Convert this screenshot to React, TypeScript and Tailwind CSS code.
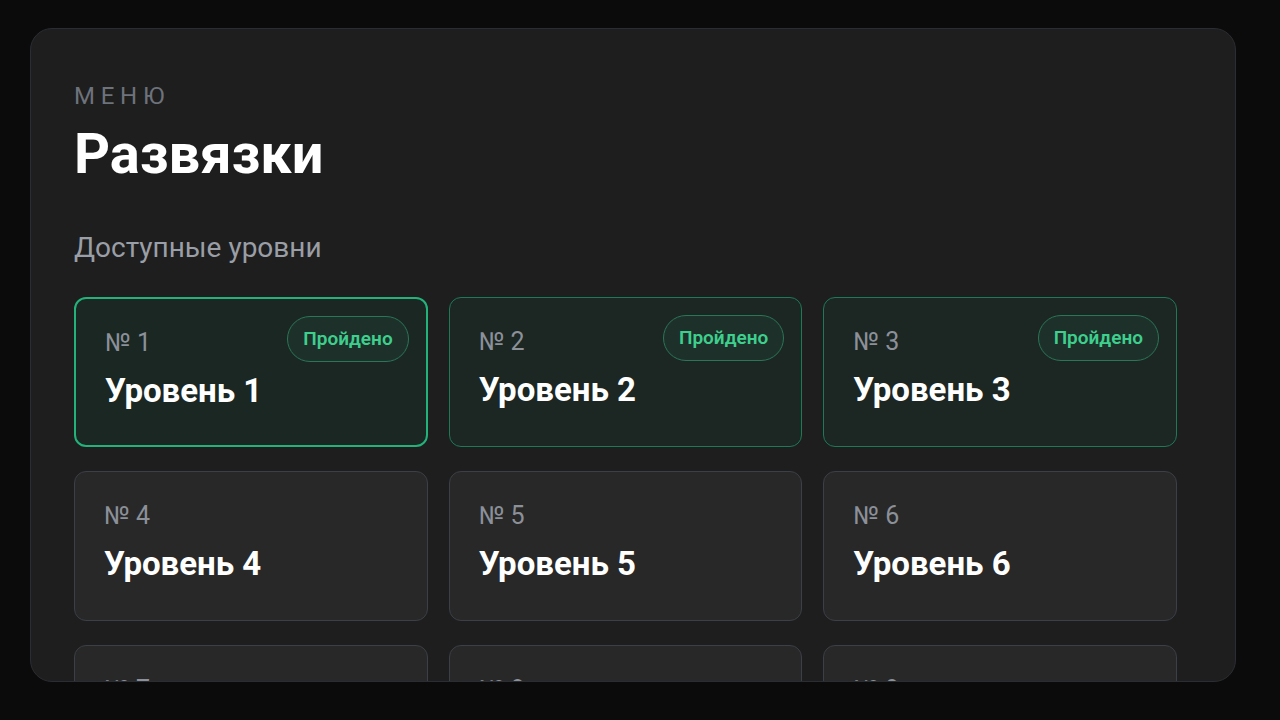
const levels = [
  { n: 1, done: true, active: true },
  { n: 2, done: true },
  { n: 3, done: true },
  { n: 4 },
  { n: 5 },
  { n: 6 },
  { n: 7 },
  { n: 8 },
  { n: 9 },
];

function LevelCard({ n, done, active }: { n: number; done?: boolean; active?: boolean }) {
  const base = 'relative h-[150px] rounded-[12px] px-[29px] pt-[27px]';
  const style = active
    ? 'border-2 border-[#22b27a] bg-[#1b2723]'
    : done
      ? 'border border-[#1d7a58] bg-[#1c2623]'
      : 'border border-[#3b3f46] bg-[#282828]';
  return (
    <div className={`${base} ${style}`}>
      {done && (
        <span className="absolute right-[17px] top-[17px] rounded-full border border-[#2a7658] bg-[#1d3029] px-[15px] py-[9px] text-[19px] font-semibold leading-[26px] text-[#3ecf8e]">
          Пройдено
        </span>
      )}
      <div className="text-[25px] leading-[34px] text-[#8b9099]">№ {n}</div>
      <div className="mt-[12px] text-[33px] font-bold leading-[38px] text-white">Уровень {n}</div>
    </div>
  );
}

export default function App() {
  return (
    <div className="h-[720px] w-[1280px] bg-[#0b0b0c] px-[30px] pt-[28px]" style={{ fontFamily: 'Roboto, "Noto Sans", sans-serif' }}>
      <div className="h-[654px] w-[1206px] overflow-hidden rounded-[22px] border border-[#2a2d31] bg-[#1e1e1f] pl-[43px] pr-[58px] pt-[56px]">
        <div className="text-[24px] leading-[28px] tracking-[0.24em] text-[#6d727b]" style={{ marginTop: -3 }}>МЕНЮ</div>
        <h1 className="mt-[12px] text-[56px] font-bold leading-[64px] text-white">Развязки</h1>
        <div className="mt-[45px] text-[28px] leading-[34px] text-[#9a9ea6]">Доступные уровни</div>
        <div className="mt-[32px] grid grid-cols-3 gap-x-[21px] gap-y-[24px]">
          {levels.map((l) => (
            <LevelCard key={l.n} {...l} />
          ))}
        </div>
      </div>
    </div>
  );
}
